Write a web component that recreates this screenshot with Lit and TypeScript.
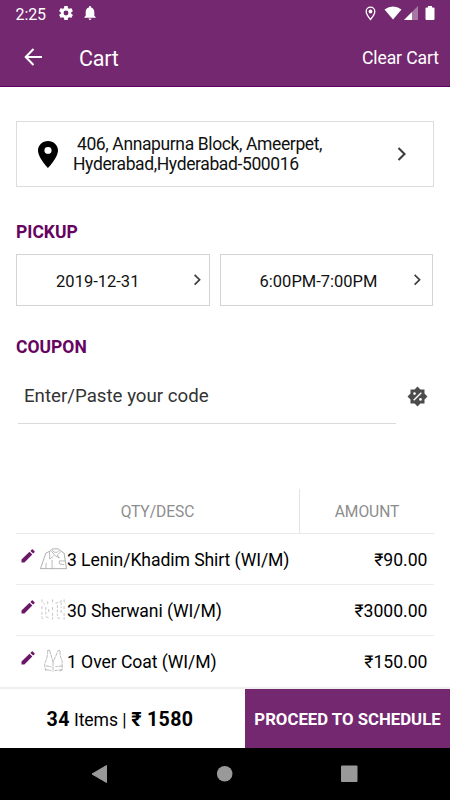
import { LitElement, html, css, svg } from "lit";
import { customElement, property } from "lit/decorators.js";

interface CartItem {
  qty: number;
  name: string;
  amount: string;
  art: "shirt" | "sherwani" | "coat";
}

const ITEMS: CartItem[] = [
  { qty: 3, name: "Lenin/Khadim Shirt (WI/M)", amount: "₹90.00", art: "shirt" },
  { qty: 30, name: "Sherwani (WI/M)", amount: "₹3000.00", art: "sherwani" },
  { qty: 1, name: "Over Coat (WI/M)", amount: "₹150.00", art: "coat" },
];

const GARMENTS = {
  shirt: svg`<path d="M.5 22 6 6 10 4 13 1.500H19L22 4 25 6 27.500 22Z" stroke="#888"/>
    <path d="M10 4 10 12 14 9M12 4 15 8 20 11 18 8 22 4M12.500 3 15 5H18L20 3M6 22 6.500 16M12.500 22V13M20 14H26M20 14V17L25 18M15 20V20.500" stroke="#999"/>`,
  sherwani: svg`<path d="M2 1V4L5 6M2 8V11M2 14V20L3 22M8 3V7M6 9V17M6 19 9 20M13 1V6M13 9V13M13 15V22M16 5 20 4 23 2M18 7V18M18 20 21 21M22 4V10M25 1V5M22 12V16M25 8V12M25 15V22M9 11V15" stroke="#aaa" stroke-dasharray="3 1.500"/>`,
  coat: svg`<path d="M8 1C8 7 7 9 6 12C4 15 5 19 6 22M10 1 13.500 13 19 1H21C20 6 22 9 23 12V21L20 23M13.500 13V23M8 1 10 1M6 17 12 18M23 17 16 18M6 21 12 22M23 21 15 22" stroke="#999" stroke-dasharray="4 .7"/>`,
};

@customElement("chevron-icon")
class ChevronIcon extends LitElement {
  static styles = css`
    :host { display: block; width: 10px; height: 14px; }
    svg { display: block; width: 100%; height: 100%; }
  `;
  render() {
    return html`<svg viewBox="0 0 10 14" fill="none" stroke="#3c3c3c" stroke-width="2.100"><path d="m1.500 1 6 6-6 6"/></svg>`;
  }
}

@customElement("cart-row")
class CartRow extends LitElement {
  @property({ attribute: false }) item!: CartItem;
  static styles = css`
    :host {
      display: flex; box-sizing: border-box; height: 51px; align-items: center;
      border-bottom: 1px solid #ededed; color: #000; font-size: 17.600px; white-space: pre;
    }
    :host(:last-child) { border-color: #fff; }
    .pencil { width: 14px; height: 14px; margin: -7px 5px 0 5px; }
    .art { width: 27px; height: 24px; }
    .name { flex: 1; padding-top: 2px; letter-spacing: -.08px; }
    .amount { margin-right: 6.500px; padding-top: 2px; }
  `;
  render() {
    const { qty, name, amount, art } = this.item;
    return html`
      <svg class="pencil" viewBox="0 0 14 14" fill="#6b1767"><path d="M.5 13.500V10.400L8.500 2.700 11.300 5.500 3.400 13.500Z"/><path d="m9.400 1.900 1.400-1.400q.5-.5 1 0l1.700 1.700q.5.5 0 1L12.100 4.600Z"/></svg>
      <svg class="art" viewBox="0 0 28 24" fill="none" stroke-width=".7">${GARMENTS[art]}</svg>
      <span class="name">${qty} ${name}</span>
      <span class="amount">${amount}</span>`;
  }
}

@customElement("app-root")
class AppRoot extends LitElement {
  static styles = css`
    :host {
      display: flex; flex-direction: column; width: 450px; height: 800px; overflow: hidden;
      background: #fff; font-family: Roboto, "Liberation Sans", sans-serif; color: #111;
    }
    * { box-sizing: border-box; }
    svg { display: block; flex: none; }
    .status { height: 28px; display: flex; align-items: center; background: #74286f; color: #fff; padding: 0 15px 2px 15.500px; font-size: 16px; }
    .time { width: 43px; padding-top: 2px; letter-spacing: -.1px; }
    .bell { margin-left: 11px; }
    .grow { flex: 1; }
    .place { margin-right: 8px; }
    .signal { margin: 0 7px 0 2px; }
    .bar { height: 59px; flex: none; display: flex; align-items: center; background: #74286f; color: #fff; border-bottom: 1px solid #640060; padding: 0 11px 0 24px; }
    .title { font-size: 21.500px; letter-spacing: -.25px; margin-left: 37px; padding-top: 2px; flex: 1; }
    .clear { font-size: 17.600px; letter-spacing: -.1px; padding-top: 1px; }
    main { flex: 1; min-height: 0; padding: 34px 16px 0; overflow: hidden; }
    .address { height: 66px; border: 1px solid #dcdcdc; display: flex; align-items: center; padding: 0 26px 0 21px; }
    .lines { margin-left: 15px; flex: 1; white-space: pre; font-size: 17.500px; letter-spacing: -.38px; line-height: 19.500px; padding-top: 1px; }
    h2 { margin: 0; font-size: 17.500px; line-height: 20px; font-weight: 700; color: #66045f; }
    .pickup { margin-top: 35px; }
    .slots { display: grid; grid-template-columns: 193.500px 213px; gap: 10.500px; margin-top: 12px; }
    .slot { height: 52px; border: 1px solid #d4d4d4; display: flex; align-items: center; font-size: 16.500px; padding-right: 7px; }
    .slot span { flex: 1; text-align: center; padding-top: 2px; }
    .slot chevron-icon { width: 9px; height: 11.500px; }
    .date span { padding-right: 14px; }
    .time-slot { padding-right: 10px; }
    .time-slot span { padding-left: 3px; }
    .coupon { margin-top: 31px; }
    .code { display: flex; margin-top: 11px; }
    .field { width: 378px; height: 56px; margin-left: 2px; padding: 0 6px; border-bottom: 1px solid #dadada; font-size: 18.700px; line-height: 57px; color: #333; }
    .badge { margin: 18px 0 0 11px; }
    .head { display: flex; height: 45px; margin-top: 65px; border-bottom: 1px solid #e9e9e9; font-size: 15.600px; letter-spacing: -.05px; line-height: 46px; color: #8d8d8d; text-align: center; }
    .desc { width: 284px; border-right: 1px solid #e4e4e4; }
    .amt { flex: 1; }
    .foot { height: 61px; flex: none; display: flex; border-top: 2px solid #eee; }
    .total { width: 245px; padding-right: 5px; text-align: center; font-size: 17.600px; letter-spacing: -.1px; line-height: 61px; color: #000; white-space: pre; }
    .total b { font-size: 19.600px; letter-spacing: .35px; }
    .total i { font-style: normal; margin: 0 .5px 0 0; }
    .go { flex: 1; background: #74286f; color: #fff; font-weight: 700; font-size: 16.750px; line-height: 61px; text-align: center; white-space: nowrap; }
    .nav { height: 52px; flex: none; background: #000; }
  `;
  render() {
    return html`
      <div class="status">
        <span class="time">2:25</span>
        <svg width="14" height="14" viewBox="2 2 20 20" fill="#fff"><path d="M19.430 12.980c.04-.32.07-.64.07-.98s-.03-.66-.07-.98l2.110-1.650c.19-.15.24-.42.12-.64l-2-3.460c-.12-.22-.39-.3-.61-.22l-2.490 1c-.52-.4-1.080-.73-1.690-.98l-.38-2.650A.488.488 0 0 0 14 2h-4c-.25 0-.46.18-.49.42l-.38 2.650c-.61.25-1.170.59-1.690.98l-2.490-1c-.23-.09-.49 0-.61.22l-2 3.460c-.13.22-.07.49.12.64l2.110 1.650c-.04.32-.07.65-.07.98s.03.66.07.98l-2.110 1.650c-.19.15-.24.42-.12.64l2 3.460c.12.22.39.3.61.22l2.490-1c.52.4 1.080.73 1.690.98l.38 2.650c.03.24.24.42.49.42h4c.25 0 .46-.18.49-.42l.38-2.650c.61-.25 1.170-.59 1.690-.98l2.490 1c.23.09.49 0 .61-.22l2-3.460c.12-.22.07-.49-.12-.64l-2.110-1.650zM12 15.500A3.500 3.500 0 1 1 12 8.500a3.500 3.500 0 0 1 0 7z"/></svg>
        <svg class="bell" width="12" height="14" viewBox="4 2.500 16 19.500" fill="#fff"><path d="M12 22c1.100 0 2-.9 2-2h-4c0 1.100.9 2 2 2zm6-6v-5c0-3.070-1.640-5.640-4.500-6.320V4a1.500 1.500 0 0 0-3 0v.68C7.630 5.360 6 7.920 6 11v5l-2 2v1h16v-1z"/></svg>
        <span class="grow"></span>
        <svg class="place" width="11" height="15" viewBox="0 0 11 15"><path d="M5.500 1.200A4.300 4.300 0 0 0 1.200 5.500c0 3 4.300 8 4.300 8s4.300-5 4.300-8A4.300 4.300 0 0 0 5.500 1.200Z" fill="none" stroke="#fff" stroke-width="1.300"/><circle cx="5.500" cy="5.500" r="1.900" fill="#fff"/></svg>
        <svg width="18" height="14" viewBox="0 0 18 14" fill="#fff"><path d="M.5 3.500Q9-2.500 17.500 3.500L9 13.500Z"/></svg>
        <svg class="signal" width="14" height="14" viewBox="0 0 14 14"><path d="M14 0V14H0Z" fill="#a678a3"/><path d="M8 6V14H0Z" fill="#fff"/></svg>
        <svg width="10" height="14" viewBox="0 0 10 14" fill="#fff"><path d="M3 0H7V1.500H8.500Q9.500 1.500 9.500 2.500V13Q9.500 14 8.500 14H1.500Q.5 14 .5 13V2.500Q.5 1.500 1.500 1.500H3Z"/></svg>
      </div>
      <div class="bar">
        <svg width="18" height="18" viewBox="0 0 18 18" fill="none" stroke="#fff" stroke-width="2"><path d="M9.500 1 1.700 9l7.800 8M2 9H18"/></svg>
        <span class="title">Cart</span>
        <span class="clear">Clear Cart</span>
      </div>
      <main>
        <div class="address">
          <svg width="20" height="27" viewBox="5 2 14 20" preserveAspectRatio="none"><path d="M12 2C8.130 2 5 5.130 5 9c0 5.250 7 13 7 13s7-7.750 7-13c0-3.870-3.130-7-7-7zm0 9.500a2.500 2.500 0 1 1 0-5 2.500 2.500 0 0 1 0 5z"/></svg>
          <div class="lines"> 406, Annapurna Block, Ameerpet,
Hyderabad,Hyderabad-500016</div>
          <chevron-icon></chevron-icon>
        </div>
        <h2 class="pickup">PICKUP</h2>
        <div class="slots">
          <div class="slot date"><span>2019-12-31</span><chevron-icon></chevron-icon></div>
          <div class="slot time-slot"><span>6:00PM-7:00PM</span><chevron-icon></chevron-icon></div>
        </div>
        <h2 class="coupon">COUPON</h2>
        <div class="code">
          <div class="field">Enter/Paste your code</div>
          <svg class="badge" width="21" height="21" viewBox="0 0 21 21"><path d="M10.500.5 13.400 3.500H17.500V7.600L20.500 10.500 17.500 13.400V17.500H13.400L10.500 20.500 7.600 17.500H3.500V13.400L.5 10.500 3.500 7.600V3.500H7.600Z" fill="#4c4c4c"/><path d="M6.700 14.300 14.300 6.700" fill="none" stroke="#fff" stroke-width="1.400"/><circle cx="7.500" cy="7.600" r="1.300" fill="#fff"/><circle cx="13.500" cy="13.400" r="1.300" fill="#fff"/></svg>
        </div>
        <div class="head"><span class="desc">QTY/DESC</span><span class="amt">AMOUNT</span></div>
        ${ITEMS.map((item) => html`<cart-row .item=${item}></cart-row>`)}
      </main>
      <div class="foot">
        <div class="total"><b>34</b> Items<i> | </i><b>₹ 1580</b></div>
        <div class="go">PROCEED TO SCHEDULE</div>
      </div>
      <svg class="nav" width="450" height="52" viewBox="0 0 450 52" fill="#999"><path d="M92 26 106.500 17.500V34.500Z" stroke="#999" stroke-linejoin="round"/><circle cx="224.700" cy="25.700" r="7.800"/><rect x="341" y="17.500" width="16.500" height="16.500" rx="1"/></svg>`;
  }
}
